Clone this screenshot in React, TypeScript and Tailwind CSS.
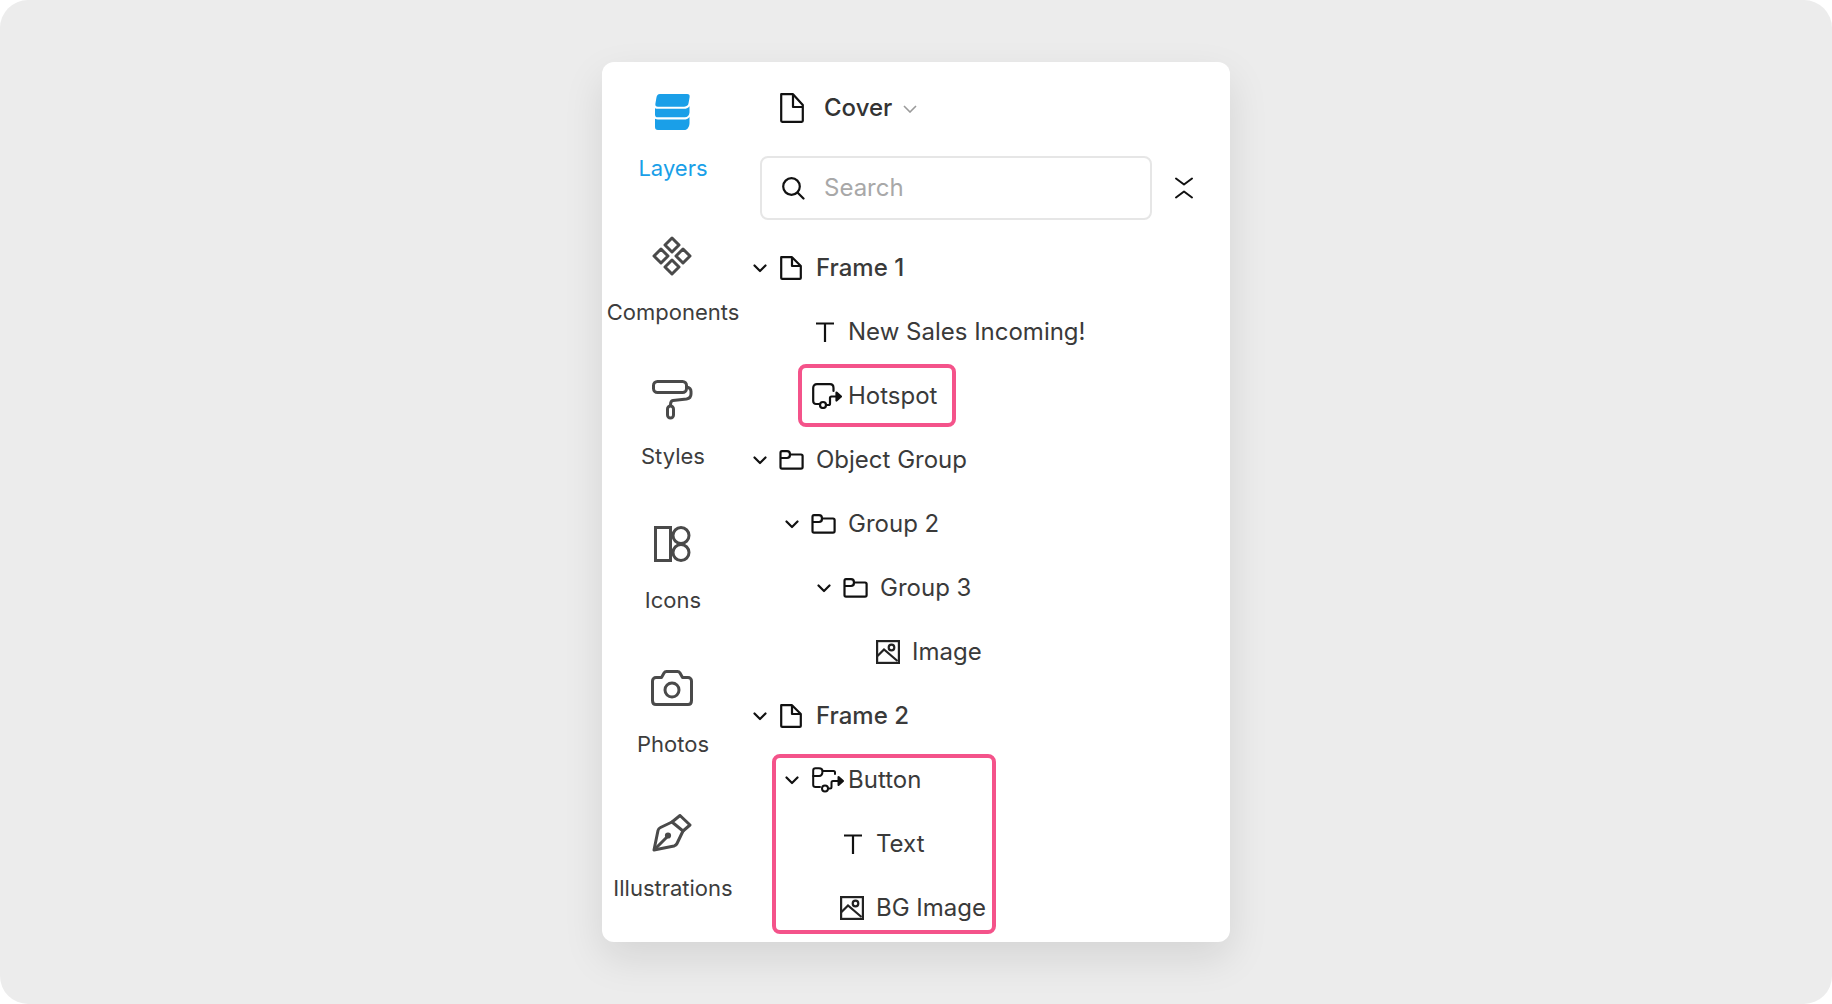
const sideStroke = '#4a4a4a';

function LayersIcon() {
  return (
    <svg width="35" height="37" viewBox="0 0 36 38" fill="#1a9fe8">
      <path d="M5 0H33C35 0 36 1 35.6 3L34.6 9C34.2 11.5 33 13 30 13H3C1 13 0 12 0.4 10L1.4 4C1.8 1.5 3 0 5 0Z" />
      <path d="M0 14.5C1 15 2 15.2 3 15.2H30C32 15.2 34 14.5 35.5 12.5V19C35.2 22 33.5 24 30.5 24H3C1 24 0 23 0 21Z" />
      <path d="M0 25.5C1 26 2 26.2 3 26.2H30C32 26.2 34 25.5 35.5 23.5V30C35.2 34 33.5 37 30 37H3C1 37 0 36 0 34Z" />
    </svg>
  );
}

function ComponentsIcon() {
  return (
    <svg width="40" height="40" viewBox="0 0 40 40" fill="none" stroke={sideStroke} strokeWidth="3" strokeLinejoin="round">
      <path d="M20 2L27 9L20 16L13 9Z" />
      <path d="M9 13L16 20L9 27L2 20Z" />
      <path d="M31 13L38 20L31 27L24 20Z" />
      <path d="M20 24L27 31L20 38L13 31Z" />
    </svg>
  );
}

function StylesIcon() {
  return (
    <svg width="41" height="40" viewBox="0 0 41 40" fill="none" stroke={sideStroke} strokeWidth="3" strokeLinecap="round" strokeLinejoin="round">
      <rect x="1.5" y="1.5" width="33" height="11" rx="4" />
      <path d="M34.5 7C37.5 7.5 39 9 39 11.5V14C39 17 37.5 18.5 34.5 19L21 20.5C19 20.8 18.5 22 18.5 25" />
      <rect x="15.5" y="26" width="6" height="12" rx="3" />
    </svg>
  );
}

function IconsIcon() {
  return (
    <svg width="37" height="36" viewBox="0 0 37 36" fill="none" stroke={sideStroke} strokeWidth="3">
      <rect x="1.5" y="1.5" width="15" height="33" />
      <circle cx="27" cy="9.5" r="8" />
      <circle cx="27" cy="26.5" r="8" />
    </svg>
  );
}

function CameraIcon() {
  return (
    <svg width="42" height="36" viewBox="0 0 42 36" fill="none" stroke={sideStroke} strokeWidth="3" strokeLinejoin="round">
      <path d="M5 7.5H10.5L13 3C13.6 2 14.3 1.5 15.5 1.5H26.5C27.7 1.5 28.4 2 29 3L31.5 7.5H37C39 7.5 40.5 9 40.5 11V30.5C40.5 33 39 34.5 37 34.5H5C3 34.5 1.5 33 1.5 30.5V11C1.5 9 3 7.5 5 7.5Z" />
      <circle cx="21" cy="20" r="7" />
    </svg>
  );
}

function PenIcon() {
  return (
    <svg className="mt-[2px]" width="40" height="38" viewBox="0 0 40 38" fill="none" stroke={sideStroke} strokeWidth="3" strokeLinejoin="round" strokeLinecap="round">
      <path d="M20 8L28 1.5L38 11L31 17Z" />
      <path d="M20 8L8.5 13.5C7 14.2 6.3 15 6 16.5L2 36L22 32C23.5 31.6 24.3 31 25 29.5L31 17" />
      <path d="M2.5 35.5L15 23" />
      <circle cx="16" cy="21.5" r="1.6" fill={sideStroke} />
    </svg>
  );
}

function Chevron() {
  return (
    <svg width="14" height="9" viewBox="0 0 14 9" fill="none" stroke="#111" strokeWidth="2.2" strokeLinecap="round" strokeLinejoin="round">
      <path d="M1.5 1.5L7 7L12.5 1.5" />
    </svg>
  );
}

function FileIcon() {
  return (
    <svg width="22" height="24" viewBox="0 0 22 24" fill="none" stroke="#111" strokeWidth="2.2" strokeLinejoin="round">
      <path d="M1.2 1.2H12L20.8 10V22C20.8 22.5 20.3 22.8 19.8 22.8H2.2C1.7 22.8 1.2 22.5 1.2 22Z" />
      <path d="M12 1.2V10H20.8" />
    </svg>
  );
}

function CoverFileIcon() {
  return (
    <svg className="mb-[2px]" width="24" height="30" viewBox="0 0 24 30" fill="none" stroke="#111" strokeWidth="2.2" strokeLinejoin="round">
      <path d="M1.2 1.2H13L22.8 12V27.8C22.8 28.3 22.3 28.8 21.8 28.8H2.2C1.7 28.8 1.2 28.3 1.2 27.8Z" />
      <path d="M13 1.2V14H22.8" />
    </svg>
  );
}

function FolderIcon() {
  return (
    <svg width="25" height="20" viewBox="0 0 25 20" fill="none" stroke="#111" strokeWidth="2.2" strokeLinejoin="round">
      <path d="M1.5 3C1.5 2 2 1.2 3 1.2H8C10 1.2 11 2.5 11 4.5H22C23 4.5 23.6 5 23.6 6V17C23.6 18 23 18.6 22 18.6H3C2 18.6 1.5 18 1.5 17Z" />
      <path d="M1.5 8H8C10 8 11 6.5 11 4.5" />
    </svg>
  );
}

function ImageIcon() {
  return (
    <svg className="ml-[2px]" width="24" height="24" viewBox="0 0 24 24" fill="none" stroke="#222" strokeWidth="2.2">
      <rect x="1.1" y="1.1" width="21.8" height="21.8" />
      <path d="M1.5 16L8 9.5L21.5 21" />
      <circle cx="15.5" cy="7.5" r="2.8" />
    </svg>
  );
}

function TextIcon() {
  return (
    <svg className="ml-[4px]" width="18" height="20" viewBox="0 0 18 20" fill="none" stroke="#111" strokeWidth="2.2">
      <path d="M0 1.5H18M9 1.5V20" />
    </svg>
  );
}

function HotspotIcon() {
  return (
    <svg className="ml-[7px] shrink-0" width="30" height="26" viewBox="0 0 30 26" fill="none" stroke="#111" strokeWidth="2.2" strokeLinecap="round" strokeLinejoin="round">
      <path d="M7 21H4C2.5 21 1.2 20 1.2 18V5C1.2 2.5 2.5 1.2 5 1.2H18C20.5 1.2 21.5 2.5 21.5 5V8" />
      <path d="M14.5 22H16.5C17.5 22 18 21.5 18 20.5V15C18 14 18.5 13.5 19.5 13.5H24" />
      <circle cx="11" cy="22" r="3" />
      <path d="M24.5 9.5L29 13.5L24.5 17.5Z" fill="#111" />
    </svg>
  );
}

function FolderHotspotIcon() {
  return (
    <svg className="ml-[9px] shrink-0" width="32" height="26" viewBox="0 0 32 26" fill="none" stroke="#111" strokeWidth="2" strokeLinecap="round" strokeLinejoin="round">
      <path d="M8 20H3.5C2 20 1.2 19 1.2 18V3.5C1.2 2 2 1.2 3.5 1.2H7C9.5 1.2 10.5 2.5 10.5 4H21.5C22.5 4 23 4.5 23 5.5V7" />
      <path d="M1.2 9H7C9 9 10.5 7 10.5 4" />
      <path d="M16.5 21.5H18C19 21.5 19.5 21 19.5 20V15.5C19.5 14.5 20 14 21 14H26" />
      <circle cx="13" cy="21.5" r="3" />
      <path d="M26.5 10L31 14L26.5 18Z" fill="#111" />
    </svg>
  );
}

const sideItems = [
  { label: 'Layers', icon: <LayersIcon />, active: true },
  { label: 'Components', icon: <ComponentsIcon /> },
  { label: 'Styles', icon: <StylesIcon /> },
  { label: 'Icons', icon: <IconsIcon /> },
  { label: 'Photos', icon: <CameraIcon /> },
  { label: 'Illustrations', icon: <PenIcon /> },
];

const treeRows = [
  { depth: 0, open: true, icon: <FileIcon />, label: 'Frame 1', medium: true },
  { depth: 1, icon: <TextIcon />, label: 'New Sales Incoming!' },
  { depth: 1, icon: <HotspotIcon />, label: 'Hotspot' },
  { depth: 0, open: true, icon: <FolderIcon />, label: 'Object Group' },
  { depth: 1, open: true, icon: <FolderIcon />, label: 'Group 2' },
  { depth: 2, open: true, icon: <FolderIcon />, label: 'Group 3' },
  { depth: 3, icon: <ImageIcon />, label: 'Image' },
  { depth: 0, open: true, icon: <FileIcon />, label: 'Frame 2', medium: true },
  { depth: 1, open: true, icon: <FolderHotspotIcon />, label: 'Button' },
  { depth: 1.875, icon: <TextIcon />, label: 'Text' },
  { depth: 1.875, icon: <ImageIcon />, label: 'BG Image' },
];

export default function App() {
  return (
    <div className="flex h-[1004px] w-[1832px] justify-center overflow-hidden rounded-[28px] bg-[#ececec] pt-[62px] font-['Inter',sans-serif]">
      <div className="flex h-[880px] w-[628px] rounded-xl bg-white shadow-[0_16px_40px_rgba(0,0,0,0.10)]">
        {/* sidebar */}
        <div className="flex w-[142px] shrink-0 flex-col">
          {sideItems.map((item) => (
            <div key={item.label} className="flex h-[144px] flex-col items-center pt-[28px]">
              <div className="mr-[2px] flex h-[44px] items-center justify-center">{item.icon}</div>
              <span className={`mt-[20px] text-[22px] leading-[28px] whitespace-nowrap ${item.active ? 'text-[#1a9fe8]' : 'text-[#3d3d3d]'}`}>
                {item.label}
              </span>
            </div>
          ))}
        </div>

        {/* layers panel */}
        <div className="min-w-0 flex-1">
          <div className="flex h-[94px] items-center pl-[36px]">
            <CoverFileIcon />
            <span className="mb-[2px] ml-[20px] text-[24px] font-[450] text-[#333]">Cover</span>
            <svg className="ml-[11px]" width="14" height="8" viewBox="0 0 14 8" fill="none" stroke="#9a9a9a" strokeWidth="1.6">
              <path d="M1 1L7 7L13 1" />
            </svg>
          </div>

          <div className="flex items-center">
            <div className="ml-[16px] flex h-[64px] w-[392px] items-center rounded-lg border-2 border-[#e6e6e6] pl-[19px]">
              <svg width="24" height="24" viewBox="0 0 24 24" fill="none" stroke="#111" strokeWidth="2.2" strokeLinecap="round">
                <circle cx="10.5" cy="10.5" r="8.3" />
                <path d="M16.5 16.5L22.5 22.5" />
              </svg>
              <span className="ml-[19px] text-[24px] text-[#a8a8a8]">Search</span>
            </div>
            <svg className="ml-[22px]" width="20" height="22" viewBox="0 0 20 22" fill="none" stroke="#111" strokeWidth="2" strokeLinecap="round" strokeLinejoin="round">
              <path d="M2 1.5L10 7.5L18 1.5" />
              <path d="M2 20.5L10 14.5L18 20.5" />
            </svg>
          </div>

          <div className="relative mt-[16px]">
            {treeRows.map((row) => (
              <div key={row.label} className="flex h-[64px] items-center" style={{ paddingLeft: 4 + row.depth * 32 }}>
                <div className="flex w-[24px] shrink-0 justify-center">{row.open && <Chevron />}</div>
                <div className="ml-[3px] flex w-[32px] shrink-0 justify-center">{row.icon}</div>
                <span className={`ml-[9px] text-[24px] whitespace-nowrap text-[#3a3a3a] ${row.medium ? 'font-[450]' : ''}`}>{row.label}</span>
              </div>
            ))}
            {/* highlight outlines sit over the rows */}
            <div className="pointer-events-none absolute top-[128px] left-[54px] h-[63px] w-[158px] rounded-lg border-4 border-[#f4538a]" />
            <div className="pointer-events-none absolute top-[518px] left-[28px] h-[180px] w-[224px] rounded-lg border-4 border-[#f4538a]" />
          </div>
        </div>
      </div>
    </div>
  );
}
